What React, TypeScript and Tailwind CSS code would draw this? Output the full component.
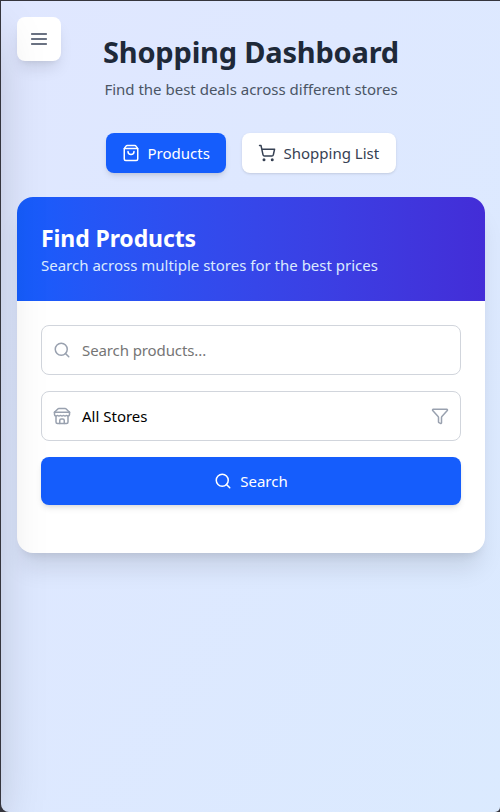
import React from "react";
import { ShoppingBag, ShoppingCart, Search, Filter } from "lucide-react";

function MenuIcon() {
  return (
    <svg width="20" height="20" viewBox="0 0 24 24" fill="none" stroke="currentColor" strokeWidth="2.2" strokeLinecap="round">
      <path d="M3.4 6h17.2M3.4 12h17.2M3.4 18h17.2" />
    </svg>
  );
}

function StoreIcon() {
  return (
    <svg width="18" height="18" viewBox="0 0 24 24" fill="none" stroke="currentColor" strokeWidth="2" strokeLinecap="round" strokeLinejoin="round" className="shrink-0 text-gray-400">
      <path d="m2 7 4.41-4.41A2 2 0 0 1 7.83 2h8.34a2 2 0 0 1 1.42.59L22 7" />
      <path d="M4 12v8a2 2 0 0 0 2 2h12a2 2 0 0 0 2-2v-8" />
      <path d="M15 22v-4a2 2 0 0 0-2-2h-2a2 2 0 0 0-2 2v4" />
      <path d="M2 7h20" />
      <path d="M22 7v3a2 2 0 0 1-2 2a2.7 2.7 0 0 1-1.59-.63.7.7 0 0 0-.82 0A2.7 2.7 0 0 1 16 12a2.7 2.7 0 0 1-1.59-.63.7.7 0 0 0-.82 0A2.7 2.7 0 0 1 12 12a2.7 2.7 0 0 1-1.59-.63.7.7 0 0 0-.82 0A2.7 2.7 0 0 1 8 12a2.7 2.7 0 0 1-1.59-.63.7.7 0 0 0-.82 0A2.7 2.7 0 0 1 4 12a2 2 0 0 1-2-2V7" />
    </svg>
  );
}

export default function App() {
  return (
    <div className="h-[812px] w-[500px] overflow-hidden bg-[#35353d] pl-px pt-px font-['Noto_Sans',sans-serif] text-[15px] leading-6">
      <div className="relative h-full overflow-hidden rounded-bl-lg rounded-br-[5px] bg-gradient-to-br from-indigo-100 to-blue-100 px-4 pt-8">
        <button className="absolute left-4 top-4 rounded-lg bg-white p-3 text-gray-500 shadow-lg">
          <MenuIcon />
        </button>
        <header className="pl-px text-center">
          <h1 className="mb-2 whitespace-nowrap pt-px text-[29px] font-bold leading-[35px] tracking-[-0.2px] text-gray-800">Shopping Dashboard</h1>
          <p className="whitespace-nowrap text-gray-600">Find the best deals across different stores</p>
        </header>
        <nav className="mt-8 flex justify-center gap-4">
          <button className="flex h-10 w-[120px] items-center gap-2 whitespace-nowrap rounded-lg bg-[#155dfc] pl-4 text-white shadow-md">
            <ShoppingBag size={18} />Products
          </button>
          <button className="flex h-10 w-[154px] items-center gap-2 whitespace-nowrap rounded-lg bg-white pl-4 text-gray-700 shadow-sm">
            <ShoppingCart size={18} />Shopping List
          </button>
        </nav>
        <main className="mt-6 h-[356px] w-[468px] overflow-hidden rounded-2xl bg-white shadow-xl">
          <div className="h-[104px] bg-gradient-to-r from-[#155dfc] to-[#432dd7] p-6 text-white">
            <h2 className="pt-0.5 text-[23px] font-bold leading-[30px] tracking-[-0.1px]">Find Products</h2>
            <p className="text-blue-100">Search across multiple stores for the best prices</p>
          </div>
          <div className="flex flex-col gap-4 p-6">
            <label className="flex h-[50px] items-center gap-[11px] rounded-lg border border-gray-300 px-[11px]">
              <Search size={18} className="text-gray-400" />
              <input placeholder="Search products..." className="flex-1 tracking-[-0.1px] outline-none placeholder:text-[#757575]" />
            </label>
            <div className="flex h-[50px] items-center gap-[11px] rounded-lg border border-gray-300 px-[11px]">
              <StoreIcon />
              <span className="flex-1 text-black">All Stores</span>
              <Filter size={18} className="text-gray-400" />
            </div>
            <button className="flex h-12 items-center justify-center gap-2 rounded-lg bg-[#155dfc] text-white shadow-md">
              <Search size={18} />Search
            </button>
          </div>
        </main>
        <aside className="pointer-events-none absolute -left-64 top-0 h-full w-64 bg-white shadow-2xl" />
      </div>
    </div>
  );
}
